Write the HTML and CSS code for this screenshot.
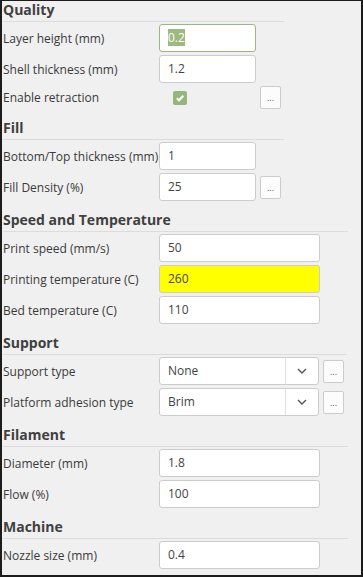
FILE: index.html
```html
<!DOCTYPE html>
<html lang="en">
<head>
  <meta charset="UTF-8">
  <title>Print Settings</title>
  <link rel="stylesheet" href="styles.css">
</head>
<body>

  <section class="group">
    <h2>Quality</h2>
    <div class="rows">
      <label>Layer height (mm)</label>
      <div class="field focus"><span class="sel">0.2</span></div>
      <span></span>

      <label>Shell thickness (mm)</label>
      <div class="field">1.2</div>
      <span></span>

      <label>Enable retraction</label>
      <div class="check-cell">
        <span class="check">
          <svg width="10" height="10" viewBox="0 0 10 10"><path d="M1.8 5.2 L4 7.3 L8.3 2.8" fill="none" stroke="#fff" stroke-width="2"/></svg>
        </span>
      </div>
      <button class="more">...</button>
    </div>
  </section>

  <section class="group">
    <h2>Fill</h2>
    <div class="rows">
      <label>Bottom/Top thickness (mm)</label>
      <div class="field">1</div>
      <span></span>

      <label>Fill Density (%)</label>
      <div class="field">25</div>
      <button class="more">...</button>
    </div>
  </section>

  <section class="group">
    <h2>Speed and Temperature</h2>
    <div class="rows">
      <label>Print speed (mm/s)</label>
      <div class="field wide">50</div>
      <span></span>

      <label>Printing temperature (C)</label>
      <div class="field wide warn">260</div>
      <span></span>

      <label>Bed temperature (C)</label>
      <div class="field wide">110</div>
      <span></span>
    </div>
  </section>

  <section class="group">
    <h2>Support</h2>
    <div class="rows">
      <label>Support type</label>
      <div class="select">
        <span class="value">None</span>
        <span class="arrow"><svg width="10" height="6" viewBox="0 0 10 6"><path d="M1 1 L5 5 L9 1" fill="none" stroke="#555" stroke-width="1.4"/></svg></span>
      </div>
      <button class="more">...</button>

      <label>Platform adhesion type</label>
      <div class="select">
        <span class="value">Brim</span>
        <span class="arrow"><svg width="10" height="6" viewBox="0 0 10 6"><path d="M1 1 L5 5 L9 1" fill="none" stroke="#555" stroke-width="1.4"/></svg></span>
      </div>
      <button class="more">...</button>
    </div>
  </section>

  <section class="group">
    <h2>Filament</h2>
    <div class="rows">
      <label>Diameter (mm)</label>
      <div class="field wide">1.8</div>
      <span></span>

      <label>Flow (%)</label>
      <div class="field wide">100</div>
      <span></span>
    </div>
  </section>

  <section class="group">
    <h2>Machine</h2>
    <div class="rows">
      <label>Nozzle size (mm)</label>
      <div class="field wide">0.4</div>
      <span></span>
    </div>
  </section>

</body>
</html>
```

FILE: styles.css
```css
html, body {
  height: 100%;
}

body {
  margin: 0;
  box-sizing: border-box;
  border: 2px solid #1c1c1c;
  border-top-width: 1px;
  background: #f0f0f0;
  padding: 0 0 0 1px;
  font-family: 'Open Sans', sans-serif;
  color: #3a3a3a;
  overflow: hidden;
}

.group {
  width: fit-content;
  margin-top: 10px;
}

.group:first-child {
  margin-top: 0;
}

h2 {
  margin: 0;
  font-size: 14px;
  font-weight: bold;
  line-height: 18px;
  color: #404040;
  padding-bottom: 2px;
  border-bottom: 1px solid #dcdcdc;
}

.rows {
  display: grid;
  grid-template-columns: 156px auto 28px;
  row-gap: 3px;
  align-items: center;
  margin-top: 2px;
}

label {
  font-size: 12px;
  white-space: nowrap;
}

.field {
  box-sizing: border-box;
  width: 97px;
  height: 28px;
  border: 1px solid #cccccc;
  border-radius: 3px;
  background: #fff;
  padding: 0 8px;
  font-size: 12px;
  line-height: 26px;
  color: #444;
}

.field.wide {
  width: 161px;
}

.field.focus {
  border-color: #9ab87c;
}

.sel {
  background: #9cb97f;
  color: #fff;
}

.field.warn {
  background: #ffff00;
}

.check-cell {
  height: 23px;
  display: flex;
  align-items: center;
}

.check {
  margin-left: 14px;
  width: 14px;
  height: 14px;
  border-radius: 2px;
  background: #97b67a;
  display: flex;
  align-items: center;
  justify-content: center;
}

.more {
  box-sizing: border-box;
  width: 21px;
  height: 23px;
  margin-left: 4px;
  padding: 0;
  border: 1px solid #cccccc;
  border-radius: 2px;
  background: #fcfcfc;
  font-family: 'Open Sans', sans-serif;
  font-size: 9px;
  color: #555;
  line-height: 21px;
}

.select {
  box-sizing: border-box;
  width: 160px;
  height: 28px;
  border: 1px solid #cccccc;
  border-radius: 3px;
  background: #fff;
  display: flex;
  font-size: 12px;
  color: #444;
}

.select .value {
  flex: 1;
  padding: 0 8px;
  line-height: 26px;
}

.select .arrow {
  width: 32px;
  border-left: 1px solid #e2e2e2;
  display: flex;
  align-items: center;
  justify-content: center;
}
```
